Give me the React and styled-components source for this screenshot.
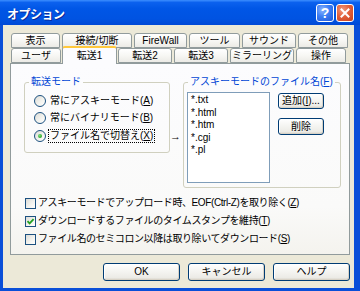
import React from 'react';
import styled, { createGlobalStyle } from 'styled-components';

const Global = createGlobalStyle`
  html, body { margin: 0; padding: 0; background: #ffffff; }
  body { font-family: "Liberation Sans", "Noto Sans CJK JP", sans-serif; }
  * { box-sizing: border-box; }
`;

const Window = styled.div`
  width: 360px;
  height: 291px;
  display: flex;
  flex-direction: column;
  background: #0A4FD8;
  font-family: "Liberation Sans", "Noto Sans CJK JP", sans-serif;
  font-size: 10px;
  color: #000;
`;

const TitleBar = styled.div`
  height: 25px;
  flex: none;
  display: flex;
  align-items: center;
  padding: 1px 6px 0 7px;
  background: linear-gradient(to bottom, #3C8EFF 0%, #0B61EE 10%, #0056E6 35%, #0053E2 75%, #0049D6 100%);
`;

const Title = styled.div`
  flex: 1;
  color: #fff;
  font-weight: bold;
  font-size: 12px;
  letter-spacing: -0.5px;
  text-shadow: 1px 1px 0 #0A2A9A;
`;

const CapButton = styled.div`
  width: 18px;
  height: 18px;
  margin-left: 2px;
  border: 1px solid #fff;
  border-radius: 3px;
  display: flex;
  align-items: center;
  justify-content: center;
  color: #fff;
  font-weight: bold;
  font-size: 14px;
  font-family: "Liberation Sans", sans-serif;
  background: ${p => p.$kind === 'close'
    ? 'radial-gradient(circle at 35% 30%, #F09A80 0%, #E2613C 45%, #C8401C 100%)'
    : 'radial-gradient(circle at 35% 30%, #8DB5FF 0%, #3C7EF4 45%, #2058D8 100%)'};
`;

const Client = styled.div`
  flex: 1;
  margin: 0 6px 3px 3px;
  background: #ECE9D8;
  display: flex;
  flex-direction: column;
  padding: 8px 4px 0 7px;
`;

const TabStrip = styled.div`
  display: flex;
  flex-direction: column;
  padding-left: 1px;
`;

const TabRow = styled.div`
  display: flex;
  gap: 2px;
  height: 15px;
  align-items: flex-end;
`;

const Tab = styled.div`
  width: ${p => p.$w}px;
  height: ${p => (p.$active ? 18 : 15)}px;
  margin: ${p => (p.$active ? '0 -1px -1px -1px' : '0')};
  padding-top: ${p => (p.$active ? 0 : 1)}px;
  position: relative;
  z-index: ${p => (p.$active ? 2 : 1)};
  border: 1px solid #919B9C;
  border-bottom: ${p => (p.$active ? 'none' : '1px solid #919B9C')};
  border-top: ${p => (p.$active ? '2px solid #FFC83C' : '1px solid #919B9C')};
  border-radius: 3px 3px 0 0;
  background: ${p => (p.$active ? '#FCFCFE' : 'linear-gradient(to bottom, #FFFFFF 0%, #F7F7F4 50%, #ECEBE6 100%)')};
  display: flex;
  align-items: center;
  justify-content: center;
  font-size: 10px;
  line-height: 12px;
  white-space: nowrap;
`;

const Panel = styled.div`
  height: 192px;
  border: 1px solid #919B9C;
  background: linear-gradient(to bottom, #FCFCFE 0%, #FAFAF9 75%, #F4F3EE 100%);
  padding: 12px 0 0 13px;
  display: flex;
  flex-direction: column;
  position: relative;
  z-index: 1;
`;

const TopSection = styled.div`
  display: flex;
  align-items: flex-start;
`;

const Group = styled.fieldset`
  margin: 0;
  padding: 0;
  width: ${p => p.$w}px;
  height: ${p => p.$h}px;
  border: 1px solid #D0D0BF;
  border-radius: 3px;
  min-width: 0;
`;

const Legend = styled.legend`
  margin-left: 4px;
  padding: 0 2px;
  color: #0046D5;
  font-size: 10px;
  line-height: 12px;
  white-space: nowrap;
`;

const RadioList = styled.div`
  padding: 4px 0 0 9px;
  display: flex;
  flex-direction: column;
`;

const OptionRow = styled.div`
  height: ${p => p.$h}px;
  display: flex;
  align-items: center;
  gap: ${p => p.$gap}px;
  white-space: nowrap;
  line-height: 12px;
`;

const Radio = styled.span`
  width: 12px;
  height: 12px;
  border-radius: 50%;
  border: 1px solid #1C5180;
  background: linear-gradient(135deg, #DCDCD7 0%, #F4F4F0 60%, #FFFFFF 100%);
  display: flex;
  align-items: center;
  justify-content: center;
  flex: none;
  &::after {
    content: '';
    display: ${p => (p.$checked ? 'block' : 'none')};
    width: 4px;
    height: 4px;
    border-radius: 50%;
    background: radial-gradient(circle at 35% 35%, #7BE07B 0%, #21A121 80%);
  }
`;

const Label = styled.span`
  padding: 0 1px;
  border: 1px ${p => (p.$focus ? 'dotted #000' : 'solid transparent')};
  line-height: 12px;
  letter-spacing: ${p => p.$ls || 0}px;
`;

const Arrow = styled.div`
  width: 13px;
  margin-top: 54px;
  text-align: left;
  font-size: 11px;
  line-height: 12px;
`;

const FileArea = styled.div`
  display: flex;
  align-items: flex-start;
  padding: 4px 0 0 3px;
`;

const ListBox = styled.div`
  width: 83px;
  height: 91px;
  border: 1px solid #7F9DB9;
  background: #fff;
  padding: 1px 3px;
  font-size: 10px;
  line-height: 12.5px;
`;

const SideButtons = styled.div`
  display: flex;
  flex-direction: column;
  gap: 9px;
  margin: 1px 0 0 8px;
`;

const Button = styled.div`
  width: ${p => p.$w}px;
  height: ${p => p.$h}px;
  border: 1px solid #003C74;
  border-radius: 3px;
  background: linear-gradient(to bottom, #FFFFFF 0%, #F6F6F3 40%, #ECEBE6 85%, #D6D0C5 100%);
  box-shadow: inset -1px -1px 0 #D8D2C6, inset 1px 1px 0 #FFFFFF;
  display: flex;
  align-items: center;
  justify-content: center;
  font-size: 10px;
  line-height: 12px;
  white-space: nowrap;
`;

const CheckList = styled.div`
  display: flex;
  flex-direction: column;
  margin-top: 6px;
  padding-left: 1px;
`;

const CheckBox = styled.span`
  width: 11px;
  height: 11px;
  border: 1px solid #1C5180;
  background: linear-gradient(135deg, #DCDCD7 0%, #F4F4F0 60%, #FFFFFF 100%);
  display: flex;
  align-items: center;
  justify-content: center;
  flex: none;
`;

const Footer = styled.div`
  display: flex;
  justify-content: flex-end;
  gap: 8px;
  margin-top: 8px;
`;

const Check = () => (
  <svg width="9" height="9" viewBox="0 0 9 9">
    <path d="M1.5 4.2 L3.6 6.4 L7.6 2.2" fill="none" stroke="#21A121" strokeWidth="1.8" />
  </svg>
);

const CloseGlyph = () => (
  <svg width="10" height="10" viewBox="0 0 10 10">
    <path d="M1.5 1.5 L8.5 8.5 M8.5 1.5 L1.5 8.5" stroke="#fff" strokeWidth="2" strokeLinecap="square" />
  </svg>
);

const row1 = [
  ['表示', 49], ['接続/切断', 70], ['FireWall', 53], ['ツール', 51], ['サウンド', 54], ['その他', 50],
];
const row2 = [
  ['ユーザ', 50], ['転送1', 55, true], ['転送2', 54], ['転送3', 54], ['ミラーリング', 64], ['操作', 50],
];

export default function App() {
  return (
    <>
      <Global />
      <Window>
        <TitleBar>
          <Title>オプション</Title>
          <CapButton>?</CapButton>
          <CapButton $kind="close"><CloseGlyph /></CapButton>
        </TitleBar>
        <Client>
          <TabStrip>
            <TabRow>
              {row1.map(([t, w]) => <Tab key={t} $w={w}>{t}</Tab>)}
            </TabRow>
            <TabRow>
              {row2.map(([t, w, a]) => <Tab key={t} $w={w} $active={a}>{t}</Tab>)}
            </TabRow>
          </TabStrip>
          <Panel>
            <TopSection>
              <Group $w={146} $h={77}>
                <Legend>転送モード</Legend>
                <RadioList>
                  <OptionRow $h={17.5} $gap={2}>
                    <Radio /><Label>常にアスキーモード(<u>A</u>)</Label>
                  </OptionRow>
                  <OptionRow $h={17.5} $gap={2}>
                    <Radio /><Label>常にバイナリモード(<u>B</u>)</Label>
                  </OptionRow>
                  <OptionRow $h={17.5} $gap={2}>
                    <Radio $checked /><Label $focus>ファイル名で切替え(<u>X</u>)</Label>
                  </OptionRow>
                </RadioList>
              </Group>
              <Arrow>→</Arrow>
              <Group $w={158} $h={112}>
                <Legend>アスキーモードのファイル名(<u>F</u>)</Legend>
                <FileArea>
                  <ListBox>
                    <div>*.txt</div>
                    <div>*.html</div>
                    <div>*.htm</div>
                    <div>*.cgi</div>
                    <div>*.pl</div>
                  </ListBox>
                  <SideButtons>
                    <Button $w={46} $h={16}>追加(<u>I</u>)...</Button>
                    <Button $w={46} $h={17}>削除</Button>
                  </SideButtons>
                </FileArea>
              </Group>
            </TopSection>
            <CheckList>
              <OptionRow $h={18} $gap={0}>
                <CheckBox /><Label $ls={-0.4}>アスキーモードでアップロード時、EOF(Ctrl-Z)を取り除く(<u>Z</u>)</Label>
              </OptionRow>
              <OptionRow $h={18} $gap={0}>
                <CheckBox><Check /></CheckBox><Label $ls={-0.4}>ダウンロードするファイルのタイムスタンプを維持(<u>T</u>)</Label>
              </OptionRow>
              <OptionRow $h={18} $gap={0}>
                <CheckBox /><Label $ls={-0.4}>ファイル名のセミコロン以降は取り除いてダウンロード(<u>S</u>)</Label>
              </OptionRow>
            </CheckList>
          </Panel>
          <Footer>
            <Button $w={77} $h={18}>OK</Button>
            <Button $w={77} $h={18}>キャンセル</Button>
            <Button $w={77} $h={18}>ヘルプ</Button>
          </Footer>
        </Client>
      </Window>
    </>
  );
}
